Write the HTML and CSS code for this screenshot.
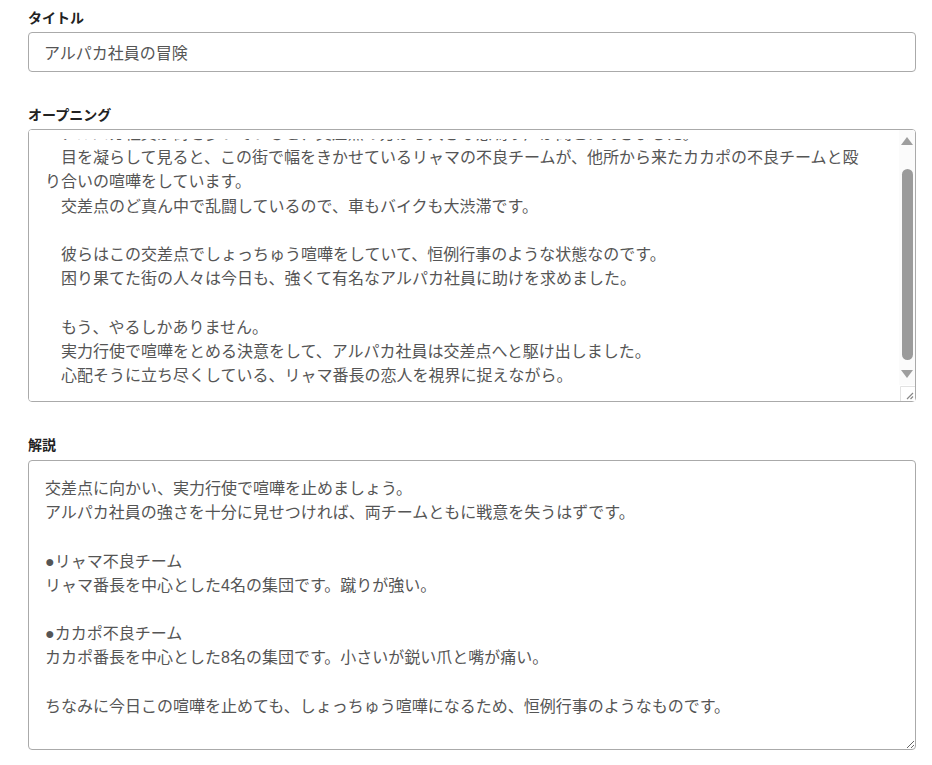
FILE: index.html
```html
<!DOCTYPE html>
<html lang="ja">
<head>
<meta charset="utf-8">
<title>シナリオ編集</title>
<link rel="stylesheet" href="styles.css">
</head>
<body>
<form class="form">
  <div class="field">
    <label class="label" for="title">タイトル</label>
    <input class="input" id="title" type="text" value="アルパカ社員の冒険">
  </div>
  <div class="field">
    <label class="label" for="opening">オープニング</label>
    <div class="scroll-wrap">
      <textarea class="textarea opening" id="opening">　アルパカ社員が街を歩いていると、交差点の方から大きな怒鳴り声が聞こえてきました。
　目を凝らして見ると、この街で幅をきかせているリャマの不良チームが、他所から来たカカポの不良チームと殴り合いの喧嘩をしています。
　交差点のど真ん中で乱闘しているので、車もバイクも大渋滞です。

　彼らはこの交差点でしょっちゅう喧嘩をしていて、恒例行事のような状態なのです。
　困り果てた街の人々は今日も、強くて有名なアルパカ社員に助けを求めました。

　もう、やるしかありません。
　実力行使で喧嘩をとめる決意をして、アルパカ社員は交差点へと駆け出しました。
　心配そうに立ち尽くしている、リャマ番長の恋人を視界に捉えながら。</textarea>
      <div class="scrollbar" aria-hidden="true">
        <div class="sb-btn">
          <svg width="12" height="8" viewBox="0 0 12 8"><path d="M6 0L12 8H0z" fill="#9e9e9e"/></svg>
        </div>
        <div class="sb-track"><div class="sb-thumb"></div></div>
        <div class="sb-btn sb-btn-down">
          <svg width="12" height="8" viewBox="0 0 12 8"><path d="M0 0H12L6 8z" fill="#9e9e9e"/></svg>
        </div>
      </div>
    </div>
  </div>
  <div class="field">
    <label class="label" for="guide">解説</label>
    <textarea class="textarea guide" id="guide">交差点に向かい、実力行使で喧嘩を止めましょう。
アルパカ社員の強さを十分に見せつければ、両チームともに戦意を失うはずです。

●リャマ不良チーム
リャマ番長を中心とした4名の集団です。蹴りが強い。

●カカポ不良チーム
カカポ番長を中心とした8名の集団です。小さいが鋭い爪と嘴が痛い。

ちなみに今日この喧嘩を止めても、しょっちゅう喧嘩になるため、恒例行事のようなものです。</textarea>
  </div>
</form>
<script src="script.js"></script>
</body>
</html>
```

FILE: styles.css
```css
html, body {
  margin: 0;
  padding: 0;
  background: #ffffff;
}

body {
  font-family: "Liberation Sans", "Noto Sans CJK JP", sans-serif;
  color: #333333;
}

.form {
  display: flex;
  flex-direction: column;
  gap: 33px;
  padding: 8px 16px 0 28px;
}

.field {
  display: flex;
  flex-direction: column;
  gap: 4px;
}

.label {
  font-size: 14px;
  font-weight: 700;
  line-height: 20px;
  color: #222222;
}

.input,
.textarea {
  box-sizing: border-box;
  width: 100%;
  margin: 0;
  border: 1px solid #aaaaaa;
  border-radius: 4px;
  background: #ffffff;
  font-family: "Liberation Sans", "Noto Sans CJK JP", sans-serif;
  font-size: 16px;
  color: #555555;
  outline: none;
}

.input {
  height: 40px;
  padding: 0 15px;
  line-height: 38px;
}

.textarea {
  display: block;
  padding: 16px 28px 16px 16px;
  line-height: 24.2px;
  resize: both;
}

.scroll-wrap {
  position: relative;
}

/* faded top edge of the scrolled text area */
.scroll-wrap::before {
  content: "";
  position: absolute;
  top: 1px;
  left: 1px;
  right: 17px;
  height: 9px;
  background: #ffffff;
  border-top-left-radius: 3px;
  z-index: 1;
  pointer-events: none;
}

.opening {
  height: 273px;
  padding-right: 43px;
  scrollbar-width: none;
}

.opening::-webkit-resizer {
  background-color: #ffffff;
  background-image: url("data:image/svg+xml,%3Csvg xmlns='http://www.w3.org/2000/svg' viewBox='0 0 15 15'%3E%3Cpath d='M0.5 15V0.5H15' fill='none' stroke='%23e2e2e2'/%3E%3Cpath d='M13 7L7 13M13 10.5L10.5 13' stroke='%23888' stroke-width='1.2'/%3E%3C/svg%3E");
  background-size: 15px 15px;
}

.scrollbar {
  position: absolute;
  top: 1px;
  right: 1px;
  bottom: 17px;
  width: 16px;
  display: flex;
  flex-direction: column;
  background: #fbfbfb;
  border-top-right-radius: 3px;
  z-index: 2;
  pointer-events: none;
}

.sb-btn {
  flex: 0 0 22px;
  display: flex;
  align-items: center;
  justify-content: center;
}

.sb-btn svg {
  display: block;
}

.sb-btn-down {
  flex-basis: 18px;
  align-items: flex-start;
  padding-top: 3px;
  box-sizing: border-box;
}

.sb-track {
  flex: 1;
  display: flex;
  justify-content: center;
  padding-top: 17px;
}

.sb-thumb {
  width: 11px;
  height: 191px;
  border-radius: 6px;
  background: #9b9b9b;
}

.guide {
  height: 290px;
  margin-top: 1px;
}
```

FILE: script.js
```js
document.getElementById('opening').scrollTop = 24;
```
